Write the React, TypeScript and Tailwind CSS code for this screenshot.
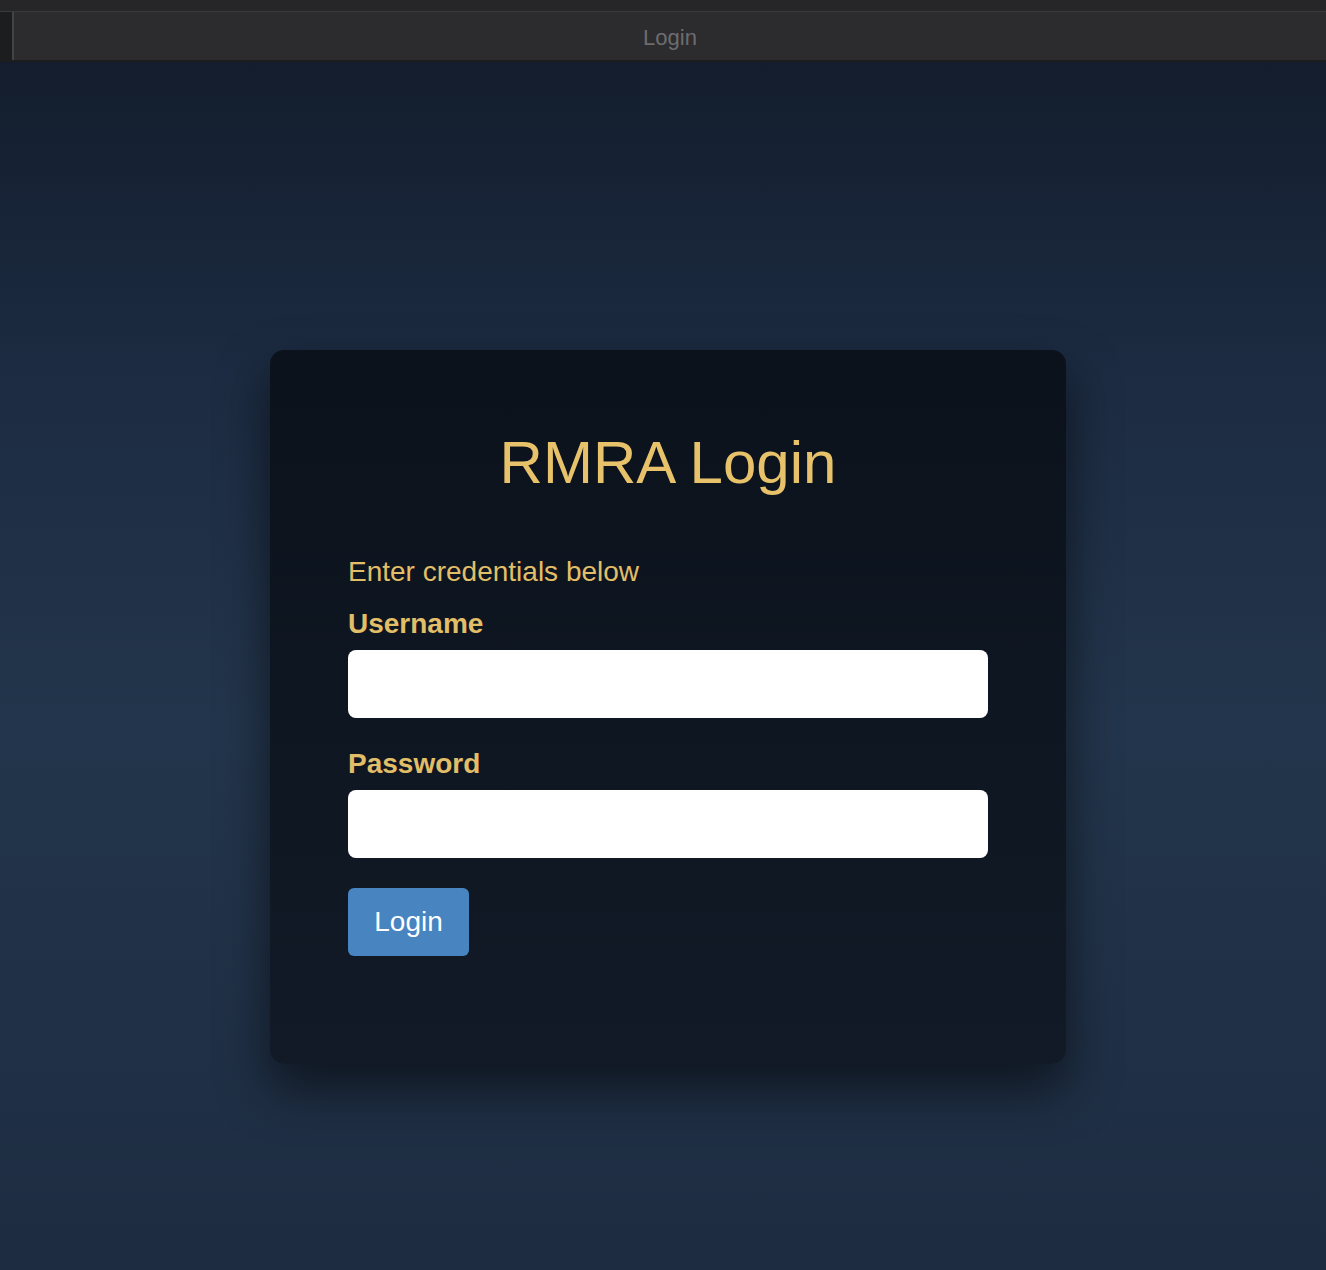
import { useState } from 'react';

const App = () => {
  const [username, setUsername] = useState('');
  const [password, setPassword] = useState('');

  const handleLogin = (e: React.FormEvent<HTMLFormElement>) => {
    e.preventDefault();
    console.log('Logging in:', { username });
  };

  return (
    <div className="min-h-screen w-full flex flex-col font-['Liberation_Sans',Arial,sans-serif] bg-[#1a2638]">
      {/* window chrome */}
      <div className="h-[12px] bg-[#262628] border-b border-[#3a3a3c]" />
      <div className="h-[50px] flex bg-[#2c2c2e] border-b-2 border-[#1d1d1f]">
        <div className="w-[14px] bg-[#1c1d1f] border-r-2 border-[#444446]" />
        <div className="flex-1 flex items-center justify-center pt-[2px] text-[22px] text-[#6c6c6e]">Login</div>
      </div>

      {/* page */}
      <main className="flex-1 flex justify-center pl-[10px] pt-[288px] pb-[206px] bg-[linear-gradient(180deg,#131d2d_0%,#1c2b41_25%,#23354c_55%,#1d2c41_100%)]">
        <form
          onSubmit={handleLogin}
          className="w-[796px] h-[714px] rounded-[14px] bg-[linear-gradient(180deg,#0b121c_0%,#111a26_100%)] shadow-[0_24px_50px_rgba(0,0,0,0.55)] px-[78px] pt-[77px]"
        >
          <h1 className="text-center text-[60px] leading-[72px] text-[#e7c26a]">RMRA Login</h1>

          <p className="mt-[56px] text-[28px] leading-[34px] text-[#e2be68]">Enter credentials below</p>

          <label htmlFor="username" className="block mt-[18px] text-[28px] leading-[34px] font-bold text-[#e2be68]">
            Username
          </label>
          <input
            id="username"
            type="text"
            value={username}
            onChange={(e) => setUsername(e.target.value)}
            className="mt-[9px] block w-full h-[68px] rounded-[8px] bg-white px-4 text-[24px] text-black outline-none"
          />

          <label htmlFor="password" className="block mt-[29px] text-[28px] leading-[34px] font-bold text-[#e2be68]">
            Password
          </label>
          <input
            id="password"
            type="password"
            value={password}
            onChange={(e) => setPassword(e.target.value)}
            className="mt-[9px] block w-full h-[68px] rounded-[8px] bg-white px-4 text-[24px] text-black outline-none"
          />

          <button
            type="submit"
            className="mt-[30px] w-[121px] h-[68px] rounded-[6px] bg-[#4784c0] text-white text-[28px]"
          >
            Login
          </button>
        </form>
      </main>
    </div>
  );
};

export default App;
